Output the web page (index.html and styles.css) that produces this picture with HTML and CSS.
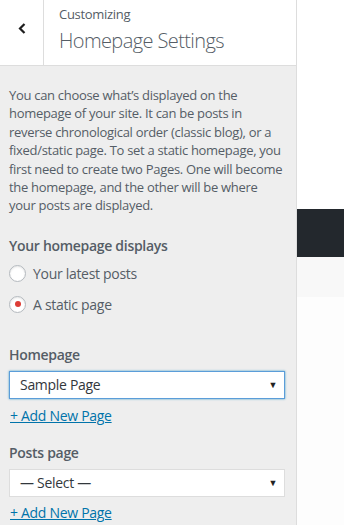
FILE: index.html
```html
<!DOCTYPE html>
<html>
  <head>
    <meta charset="utf-8">
    <title>Homepage Settings</title>
    <link rel="stylesheet" href="styles.css">
  </head>
  <body>
    <div class="sidebar">
      <div class="header">
        <div class="back">
          <svg width="8" height="11" viewBox="0 0 8 11"><path d="M6.5 1 L2 5.5 L6.5 10" fill="none" stroke="#1e1e1e" stroke-width="2.2"/></svg>
        </div>
        <div class="title">
          <span class="crumb">Customizing</span>
          <h2>Homepage Settings</h2>
        </div>
      </div>
      <div class="panel">
        <p class="desc">You can choose what&rsquo;s displayed on the homepage of your site. It can be posts in reverse chronological order (classic blog), or a fixed/static page. To set a static homepage, you first need to create two Pages. One will become the homepage, and the other will be where your posts are displayed.</p>

        <div class="control radios">
          <span class="label">Your homepage displays</span>
          <label class="radio"><span class="dot"></span>Your latest posts</label>
          <label class="radio"><span class="dot checked"></span>A static page</label>
        </div>

        <div class="control pages">
          <span class="label">Homepage</span>
          <div class="select focused">Sample Page<span class="arrow">&#9660;</span></div>
          <a class="add" href="#">+ Add New Page</a>
        </div>

        <div class="control posts">
          <span class="label">Posts page</span>
          <div class="select">&mdash; Select &mdash;<span class="arrow">&#9660;</span></div>
          <a class="add" href="#">+ Add New Page</a>
        </div>
      </div>
    </div>
    <div class="preview">
      <div class="top"></div>
      <div class="bar"></div>
      <div class="strip"></div>
    </div>
  </body>
</html>
```

FILE: styles.css
```css
body {
  margin: 0;
  display: flex;
  height: 525px;
  overflow: hidden;
  font-family: "Open Sans", "Noto Sans", sans-serif;
  letter-spacing: -0.3px;
  color: #555d66;
}
.sidebar {
  width: 296px;
  background: #eee;
  border-right: 1px solid #ddd;
  flex-shrink: 0;
}
.header {
  display: flex;
  height: 65px;
  background: #fff;
  border-bottom: 1px solid #ddd;
}
.back {
  width: 44px;
  border-right: 1px solid #ddd;
  display: flex;
  justify-content: center;
  padding-top: 23px;
  box-sizing: border-box;
}
.title { padding: 6px 0 0 15px; }
.crumb { display: block; font-size: 13px; line-height: 16px; }
.title h2 {
  margin: 6px 0 0;
  font-size: 20px;
  font-weight: 300;
  line-height: 26px;
  letter-spacing: -0.6px;
}
.panel { padding: 20px 10px 0 9px; }
.desc {
  margin: 0;
  font-size: 13px;
  line-height: 18.4px;
}
.control { margin-top: 18px; }
.control.radios { margin-top: 21px; }
.control.pages { margin-top: 25px; }
.control.posts { margin-top: 17px; }
.label {
  display: block;
  font-size: 14px;
  font-weight: 600;
  line-height: 20px;
  margin-bottom: 6px;
}
.radios .label { margin-bottom: 2px; }
.radio {
  display: flex;
  align-items: center;
  gap: 7px;
  font-size: 14px;
  height: 31px;
}
.dot {
  width: 15px;
  height: 15px;
  border: 1px solid #b4b9be;
  border-radius: 50%;
  background: #fff;
  box-shadow: inset 0 1px 2px rgba(0,0,0,.1);
  position: relative;
}
.dot.checked::after {
  content: "";
  position: absolute;
  left: 4.5px;
  top: 4.5px;
  width: 6px;
  height: 6px;
  border-radius: 50%;
  background: #dd3d36;
}
.select {
  display: flex;
  align-items: center;
  justify-content: space-between;
  height: 26px;
  padding: 0 7px 0 10px;
  margin-right: 1px;
  background: #fff;
  border: 1px solid #ddd;
  font-size: 14px;
  color: #32373c;
}
.select.focused { border-color: #5b9dd9; box-shadow: 0 0 2px rgba(30,140,190,.8); }
.arrow { font-size: 9px; color: #222; }
.add {
  display: inline-block;
  margin: 7px 0 0 1px;
  font-size: 14px;
  line-height: 19px;
  color: #0073aa;
}
.posts .add { margin-top: 6px; }
.preview { flex: 1; background: #fdfdfd; }
.top { height: 209px; background: #fff; }
.bar { height: 48px; background: #23282d; }
.strip { height: 40px; background: #f8f8f8; }
```
